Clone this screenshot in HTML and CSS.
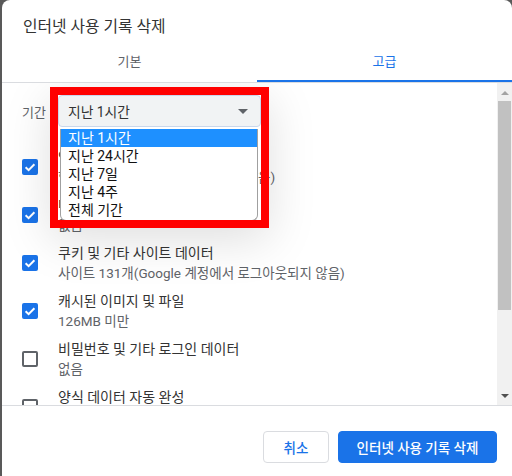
FILE: index.html
```html
<!DOCTYPE html>
<html lang="ko">
<head>
    <meta charset="UTF-8">
    <title>인터넷 사용 기록 삭제</title>
    <link rel="stylesheet" href="styles.css">
</head>
<body>
    <div class="dialog">
        <div class="title">인터넷 사용 기록 삭제</div>

        <div class="tabs">
            <div class="tab">기본</div>
            <div class="tab active">고급</div>
        </div>

        <div class="body">
            <div class="list">
                <div class="period">
                    <span class="period-label">기간</span>
                    <div class="select-wrap">
                        <div class="select">
                            <span>지난 1시간</span>
                            <span class="arrow"></span>
                        </div>
                        <div class="options">
                            <div class="option selected">지난 1시간</div>
                            <div class="option">지난 24시간</div>
                            <div class="option">지난 7일</div>
                            <div class="option">지난 4주</div>
                            <div class="option">전체 기간</div>
                        </div>
                        <div class="highlight"></div>
                    </div>
                </div>

                <div class="row">
                    <span class="check on"><svg viewBox="0 0 16 16"><path d="M3.6 8.3 6.6 11.2 12.4 5.2"/></svg></span>
                    <div class="text">
                        <div class="label">인터넷 사용 기록</div>
                        <div class="sub">항목 1,302개(동기화된 기기에 더 많음)</div>
                    </div>
                </div>
                <div class="row">
                    <span class="check on"><svg viewBox="0 0 16 16"><path d="M3.6 8.3 6.6 11.2 12.4 5.2"/></svg></span>
                    <div class="text">
                        <div class="label">다운로드 기록</div>
                        <div class="sub">없음</div>
                    </div>
                </div>
                <div class="row">
                    <span class="check on"><svg viewBox="0 0 16 16"><path d="M3.6 8.3 6.6 11.2 12.4 5.2"/></svg></span>
                    <div class="text">
                        <div class="label">쿠키 및 기타 사이트 데이터</div>
                        <div class="sub">사이트 131개(Google 계정에서 로그아웃되지 않음)</div>
                    </div>
                </div>
                <div class="row">
                    <span class="check on"><svg viewBox="0 0 16 16"><path d="M3.6 8.3 6.6 11.2 12.4 5.2"/></svg></span>
                    <div class="text">
                        <div class="label">캐시된 이미지 및 파일</div>
                        <div class="sub">126MB 미만</div>
                    </div>
                </div>
                <div class="row">
                    <span class="check"></span>
                    <div class="text">
                        <div class="label">비밀번호 및 기타 로그인 데이터</div>
                        <div class="sub">없음</div>
                    </div>
                </div>
                <div class="row">
                    <span class="check"></span>
                    <div class="text">
                        <div class="label">양식 데이터 자동 완성</div>
                    </div>
                </div>
            </div>

            <div class="scrollbar">
                <span class="sb-up"></span>
                <div class="sb-track"><div class="sb-thumb"></div></div>
                <span class="sb-down"></span>
            </div>
        </div>

        <div class="footer">
            <button class="btn">취소</button>
            <button class="btn primary">인터넷 사용 기록 삭제</button>
        </div>
    </div>
</body>
</html>
```

FILE: styles.css
```css
body {
    margin: 0;
    background-color: #595959;
    font-family: Roboto, "Noto Sans CJK KR", sans-serif;
    color: #202124;
    overflow: hidden;
}

.dialog {
    margin-left: 2px;
    width: 510px;
    height: 476px;
    background-color: #fff;
    border-radius: 8px 8px 0 0;
    display: flex;
    flex-direction: column;
}

.title {
    padding: 16px 0 0 21px;
    height: 28px;
    font-size: 15.8px;
    line-height: 22px;
    color: #333;
}

.tabs {
    display: flex;
    border-bottom: 1px solid #dadce0;
}

.tab {
    flex: 1;
    height: 36px;
    text-align: center;
    font-size: 13px;
    line-height: 35px;
    color: #5f6368;
    border-bottom: 2px solid transparent;
}

.tab.active {
    color: #1a73e8;
    border-bottom-color: #1a73e8;
}

.body {
    display: flex;
    height: 322px;
    border-bottom: 1px solid #dadce0;
    overflow: hidden;
}

.list {
    flex: 1;
    padding-top: 12px;
}

.period {
    display: flex;
    align-items: center;
    margin-bottom: 16px;
}

.period-label {
    width: 36px;
    padding-left: 20px;
    font-size: 13px;
    color: #5f6368;
}

.select-wrap {
    position: relative;
    width: 203px;
}

.select {
    height: 32px;
    box-sizing: border-box;
    border: 1px solid #c9d7ec;
    border-radius: 4px;
    background-color: #f1f3f4;
    display: flex;
    align-items: center;
    justify-content: space-between;
    padding: 0 12px 0 9px;
    font-size: 13.8px;
    color: #333;
}

.arrow {
    width: 0;
    height: 0;
    border-left: 5px solid transparent;
    border-right: 5px solid transparent;
    border-top: 5px solid #5f6368;
}

.options {
    position: absolute;
    top: 34px;
    left: 2px;
    width: 198px;
    box-sizing: border-box;
    border: 1px solid #a0a0a0;
    border-top: none;
    border-radius: 0 0 6px 6px;
    background-color: #fff;
    padding-bottom: 1px;
    z-index: 2;
}

.option {
    height: 18px;
    line-height: 18px;
    padding-left: 7px;
    font-size: 14px;
    color: #111;
}

.option.selected {
    background-color: #1e90ff;
    color: #fff;
}

.highlight {
    position: absolute;
    top: -8px;
    left: -8px;
    right: -8px;
    height: 141px;
    box-sizing: border-box;
    border: 8px solid #ff0000;
    box-shadow: 0 12px 45px rgba(0, 0, 0, 0.13);
    z-index: 3;
}

.row {
    display: flex;
    height: 48px;
    box-sizing: border-box;
    padding-top: 4px;
}

.check {
    width: 16px;
    height: 16px;
    box-sizing: border-box;
    margin: 12px 20px 0 20px;
    border: 2px solid #5f6368;
    border-radius: 2px;
    flex-shrink: 0;
}

.check.on {
    border: none;
    background-color: #1a73e8;
}

.check svg {
    display: block;
    width: 16px;
    height: 16px;
    fill: none;
    stroke: #fff;
    stroke-width: 2;
}

.label {
    font-size: 14px;
    line-height: 20px;
    color: #333;
}

.sub {
    font-size: 13.5px;
    line-height: 21px;
    color: #5f6368;
    white-space: nowrap;
}

.scrollbar {
    width: 15px;
    background-color: #f1f1f1;
    display: flex;
    flex-direction: column;
    align-items: center;
}

.sb-up,
.sb-down {
    width: 0;
    height: 0;
    border-left: 4px solid transparent;
    border-right: 4px solid transparent;
}

.sb-up {
    margin: 8px 0 6px;
    border-bottom: 4px solid #a3a3a3;
}

.sb-down {
    margin: 0 0 7px;
    border-top: 4px solid #505050;
}

.sb-track {
    flex: 1;
    width: 100%;
    display: flex;
    justify-content: center;
}

.sb-thumb {
    width: 13px;
    height: 209px;
    background-color: #c1c1c1;
}

.footer {
    display: flex;
    justify-content: flex-end;
    gap: 9px;
    padding: 25px 15px 0 0;
}

.btn {
    height: 32px;
    padding: 0 16px;
    border: 1px solid #dadce0;
    border-radius: 4px;
    background-color: #fff;
    color: #1a73e8;
    font-family: Roboto, "Noto Sans CJK KR", sans-serif;
    font-size: 13.5px;
    font-weight: 500;
}

.btn:first-child {
    width: 66px;
}

.primary {
    width: 159px;
    border-color: #1a73e8;
    background-color: #1a73e8;
    color: #fff;
}
```
